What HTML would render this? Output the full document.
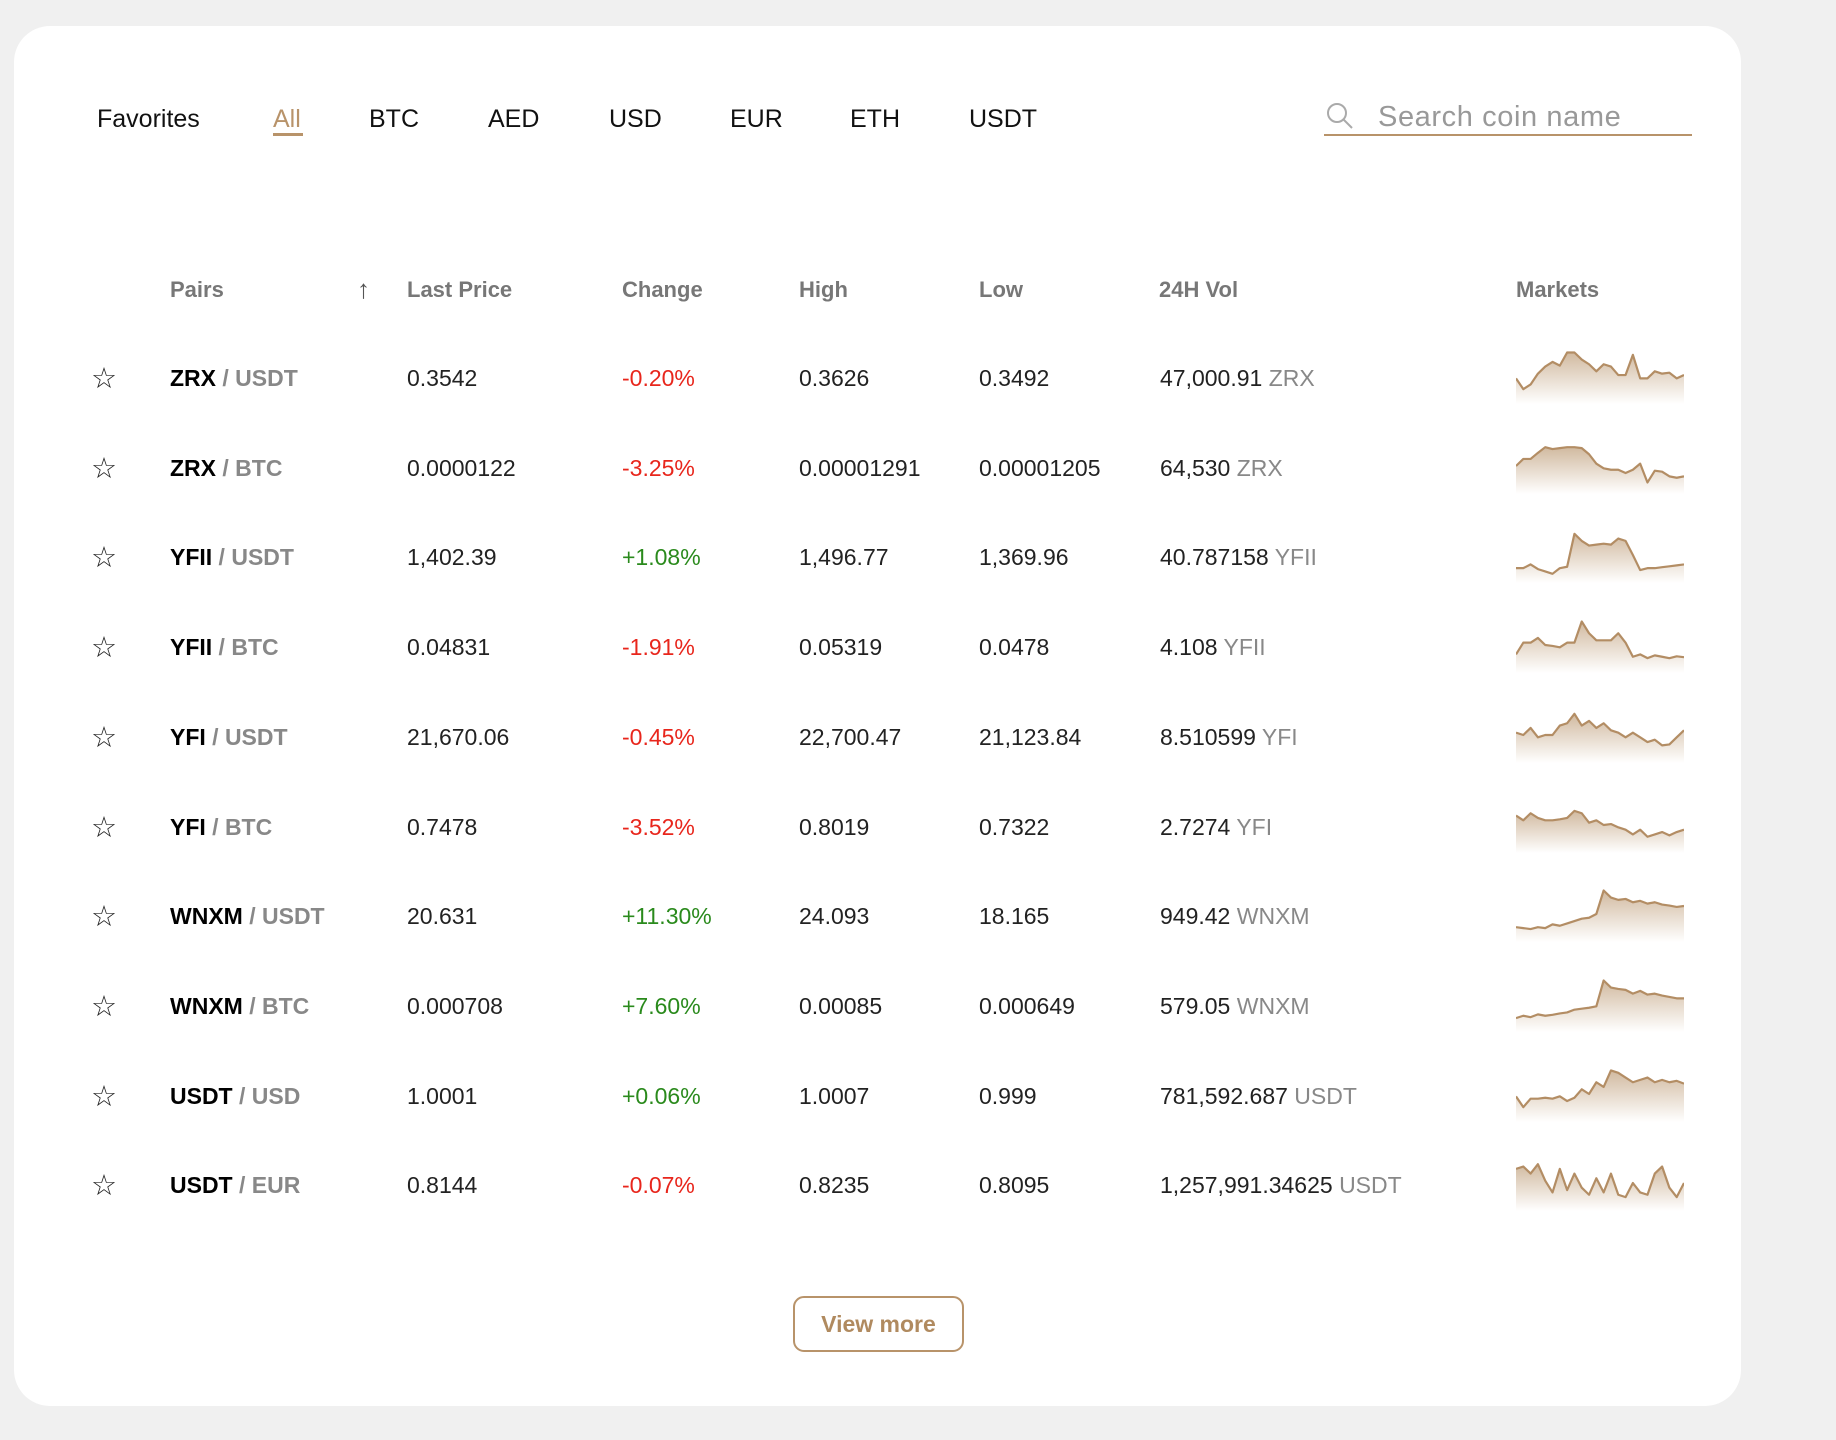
<!DOCTYPE html>
<html><head><meta charset="utf-8"><style>
*{margin:0;padding:0;box-sizing:border-box}
body{width:1836px;height:1440px;background:#f0f0f0;font-family:"Liberation Sans",sans-serif;position:relative;overflow:hidden}
.card{position:absolute;left:14px;top:26px;width:1727px;height:1380px;background:#fff;border-radius:36px}
.a{position:absolute;white-space:nowrap}
.tab{font-size:25px;color:#111;top:105px}
.h{font-size:22px;font-weight:bold;color:#777;top:277px}
.c{font-size:23px;color:#222}
.pair b{color:#000}
.pair span{color:#888;font-weight:bold}
.red{color:#e8261c}.green{color:#2a8a1c}
.g{color:#888}
.star{font-size:29px;color:#222}
svg.sp{position:absolute;left:1516px;width:168px;height:56px}
</style></head><body>
<div class="card"></div>
<div class="a tab" style="left:97px">Favorites</div>
<div class="a tab" style="left:273px;color:#b8936a">All</div>
<div class="a" style="left:273px;top:133px;width:30px;height:3px;background:#b8936a"></div>
<div class="a tab" style="left:369px">BTC</div>
<div class="a tab" style="left:488px">AED</div>
<div class="a tab" style="left:609px">USD</div>
<div class="a tab" style="left:730px">EUR</div>
<div class="a tab" style="left:850px">ETH</div>
<div class="a tab" style="left:969px">USDT</div>
<svg class="a" style="left:1325px;top:101px" width="30" height="30" viewBox="0 0 30 30"><circle cx="12" cy="12" r="9" fill="none" stroke="#aaa" stroke-width="2"/><line x1="18.5" y1="18.5" x2="27" y2="27" stroke="#aaa" stroke-width="2"/></svg>
<div class="a" style="left:1378px;top:101px;font-size:29px;color:#999;letter-spacing:0.6px">Search coin name</div>
<div class="a" style="left:1324px;top:134px;width:368px;height:2px;background:#b8936a"></div>

<div class="a h" style="left:170px">Pairs</div>
<div class="a h" style="left:357px;font-weight:normal;font-size:26px;top:274px;color:#555">↑</div>
<div class="a h" style="left:407px">Last Price</div>
<div class="a h" style="left:622px">Change</div>
<div class="a h" style="left:799px">High</div>
<div class="a h" style="left:979px">Low</div>
<div class="a h" style="left:1159px">24H Vol</div>
<div class="a h" style="left:1516px">Markets</div>

<svg width="0" height="0" style="position:absolute"><defs><linearGradient id="gr" x1="0" y1="0" x2="0" y2="1"><stop offset="0" stop-color="#b8946c" stop-opacity="0.65"/><stop offset="1" stop-color="#b8946c" stop-opacity="0"/></linearGradient></defs></svg>

<div id="rows"></div>
<script>
const rows=[
["ZRX","USDT","0.3542","-0.20%","0.3626","0.3492","47,000.91","ZRX",[55,78,68,45,30,20,28,0,0,15,25,40,25,30,48,48,5,55,55,40,45,43,55,48]],
["ZRX","BTC","0.0000122","-3.25%","0.00001291","0.00001205","64,530","ZRX",[50,35,35,22,10,14,12,10,10,12,25,45,55,58,58,65,58,45,85,60,62,72,75,72]],
["YFII","USDT","1,402.39","+1.08%","1,496.77","1,369.96","40.787158","YFII",[78,78,70,80,85,90,78,75,5,20,30,28,26,28,15,20,50,82,78,78,76,74,72,70]],
["YFII","BTC","0.04831","-1.91%","0.05319","0.0478","4.108","YFII",[70,45,45,35,50,52,55,45,45,0,25,40,40,40,25,45,75,70,78,72,75,78,74,76]],
["YFI","USDT","21,670.06","-0.45%","22,700.47","21,123.84","8.510599","YFI",[45,50,35,55,50,50,30,25,5,30,20,35,25,40,45,55,45,55,65,60,72,70,55,40]],
["YFI","BTC","0.7478","-3.52%","0.8019","0.7322","2.7274","YFI",[30,40,25,35,40,40,38,35,20,25,45,40,50,48,55,60,70,60,75,70,65,72,65,60]],
["WNXM","USDT","20.631","+11.30%","24.093","18.165","949.42","WNXM",[78,80,82,78,80,72,75,70,65,60,58,50,0,15,20,18,25,22,28,25,30,32,35,33]],
["WNXM","BTC","0.000708","+7.60%","0.00085","0.000649","579.05","WNXM",[80,75,78,72,75,73,70,68,62,60,58,55,0,15,18,20,28,22,30,28,32,35,38,38]],
["USDT","USD","1.0001","+0.06%","1.0007","0.999","781,592.687","USDT",[55,78,60,60,58,60,55,65,58,40,50,25,35,0,5,15,25,20,15,25,20,25,22,28]],
["USDT","EUR","0.8144","-0.07%","0.8235","0.8095","1,257,991.34625","USDT",[20,15,30,10,45,70,20,65,30,60,75,40,70,30,75,80,50,70,75,30,15,60,80,50]]];
let h="";
rows.forEach((r,i)=>{
 const y=365+i*89.7;
 const cls=r[3][0]=="+"?"green":"red";
 h+=`<div class="a star" style="left:91px;top:${y-4}px">☆</div>`;
 h+=`<div class="a c pair" style="left:170px;top:${y}px"><b>${r[0]}</b><span> / ${r[1]}</span></div>`;
 h+=`<div class="a c" style="left:407px;top:${y}px">${r[2]}</div>`;
 h+=`<div class="a c ${cls}" style="left:622px;top:${y}px">${r[3]}</div>`;
 h+=`<div class="a c" style="left:799px;top:${y}px">${r[4]}</div>`;
 h+=`<div class="a c" style="left:979px;top:${y}px">${r[5]}</div>`;
 h+=`<div class="a c" style="left:1160px;top:${y}px">${r[6]} <span class="g">${r[7]}</span></div>`;
 const pts=r[8].map((v,k)=>`${(k*230/23).toFixed(1)},${(8+v*0.84).toFixed(1)}`).join(" ");
 h+=`<svg class="sp" style="top:${y-17}px" viewBox="0 0 230 100" preserveAspectRatio="none"><polygon points="0,100 ${pts} 230,100" fill="url(#gr)"/><polyline points="${pts}" fill="none" stroke="#b38d64" stroke-width="2.2" vector-effect="non-scaling-stroke" stroke-linejoin="round"/></svg>`;
});
document.getElementById("rows").innerHTML=h;
</script>

<div class="a" style="left:793px;top:1296px;width:171px;height:56px;border:2px solid #b8936a;border-radius:11px;color:#b08a5f;font-weight:bold;font-size:23px;text-align:center;line-height:52px">View more</div>
</body></html>
